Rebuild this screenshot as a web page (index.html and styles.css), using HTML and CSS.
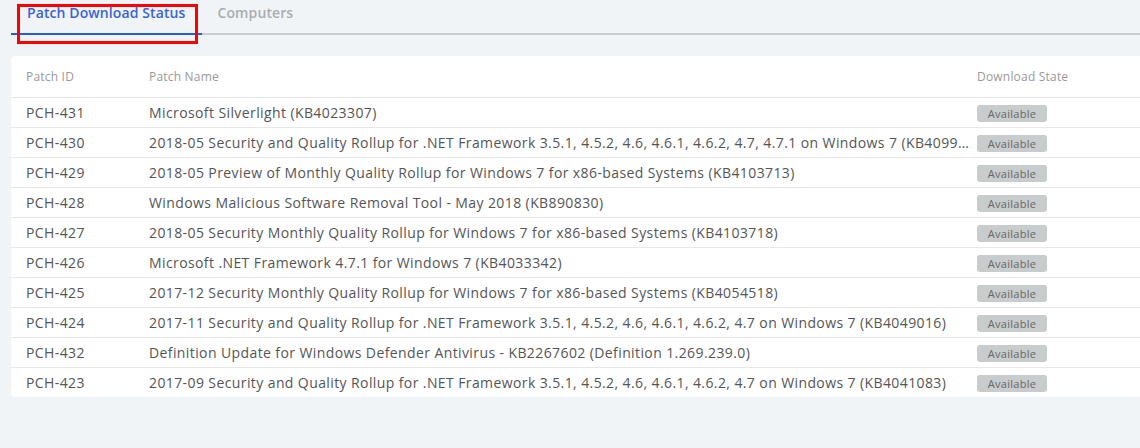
FILE: index.html
```html
<!DOCTYPE html>
<html lang="en">
<head>
    <meta charset="UTF-8">
    <title>Patch Download Status</title>
    <link rel="stylesheet" href="styles.css">
</head>
<body>
    <div class="tabs">
        <div class="tab tab-active">Patch Download Status<span class="highlight"></span></div>
        <div class="tab">Computers</div>
    </div>

    <div class="card">
        <table class="patches">
            <thead>
                <tr>
                    <th class="col-id">Patch ID</th>
                    <th class="col-name">Patch Name</th>
                    <th class="col-state">Download State</th>
                </tr>
            </thead>
            <tbody>
                <tr><td>PCH-431</td><td class="name">Microsoft Silverlight (KB4023307)</td><td class="state"><span class="badge">Available</span></td></tr>
                <tr><td>PCH-430</td><td class="name">2018-05 Security and Quality Rollup for .NET Framework 3.5.1, 4.5.2, 4.6, 4.6.1, 4.6.2, 4.7, 4.7.1 on Windows 7 (KB4099633)</td><td class="state"><span class="badge">Available</span></td></tr>
                <tr><td>PCH-429</td><td class="name">2018-05 Preview of Monthly Quality Rollup for Windows 7 for x86-based Systems (KB4103713)</td><td class="state"><span class="badge">Available</span></td></tr>
                <tr><td>PCH-428</td><td class="name">Windows Malicious Software Removal Tool - May 2018 (KB890830)</td><td class="state"><span class="badge">Available</span></td></tr>
                <tr><td>PCH-427</td><td class="name">2018-05 Security Monthly Quality Rollup for Windows 7 for x86-based Systems (KB4103718)</td><td class="state"><span class="badge">Available</span></td></tr>
                <tr><td>PCH-426</td><td class="name">Microsoft .NET Framework 4.7.1 for Windows 7 (KB4033342)</td><td class="state"><span class="badge">Available</span></td></tr>
                <tr><td>PCH-425</td><td class="name">2017-12 Security Monthly Quality Rollup for Windows 7 for x86-based Systems (KB4054518)</td><td class="state"><span class="badge">Available</span></td></tr>
                <tr><td>PCH-424</td><td class="name">2017-11 Security and Quality Rollup for .NET Framework 3.5.1, 4.5.2, 4.6, 4.6.1, 4.6.2, 4.7 on Windows 7 (KB4049016)</td><td class="state"><span class="badge">Available</span></td></tr>
                <tr><td>PCH-432</td><td class="name">Definition Update for Windows Defender Antivirus - KB2267602 (Definition 1.269.239.0)</td><td class="state"><span class="badge">Available</span></td></tr>
                <tr><td>PCH-423</td><td class="name">2017-09 Security and Quality Rollup for .NET Framework 3.5.1, 4.5.2, 4.6, 4.6.1, 4.6.2, 4.7 on Windows 7 (KB4041083)</td><td class="state"><span class="badge">Available</span></td></tr>
            </tbody>
        </table>
    </div>
</body>
</html>
```

FILE: styles.css
```css
body {
    margin: 0;
    background-color: #f0f4f7;
    font-family: "Open Sans", Lato, sans-serif;
    color: #555;
    overflow: hidden;
    width: 1140px;
}
.tabs {
    display: flex;
    margin-left: 11px;
    border-bottom: 2px solid #c8cccd;
    height: 35px;
    box-sizing: border-box;
}
.tab {
    position: relative;
    padding: 3px 16px 0 16px;
    font-size: 14px;
    font-weight: 600;
    letter-spacing: 0.1px;
    color: #a9adb0;
    line-height: 19px;
}
.tab-active {
    color: #3a64d4;
    border-bottom: 2px solid #2b5bd5;
    margin-bottom: -2px;
}
.highlight {
    position: absolute;
    left: 6px;
    top: 4px;
    width: 181px;
    height: 40px;
    box-sizing: border-box;
    border: 3px solid #ff0000;
}
.card {
    margin: 21px 0 0 11px;
    background-color: #fff;
    border-radius: 4px;
    width: 1140px;
}
.patches {
    width: 100%;
    border-collapse: collapse;
    table-layout: fixed;
}
.patches th {
    text-align: left;
    font-weight: normal;
    font-size: 12px;
    letter-spacing: 0.2px;
    color: #999;
    height: 41px;
    padding: 0 15px;
    border-bottom: 1px solid #e8e8e8;
}
.col-id {
    width: 93px;
}
.patches th.col-name {
    width: 826px;
    padding-right: 0;
}
.patches th.col-state,
.patches td.state {
    padding-left: 2px;
}
.patches td {
    height: 29px;
    padding: 0 15px;
    font-size: 14px;
    letter-spacing: 0.4px;
    border-bottom: 1px solid #e8e8e8;
    white-space: nowrap;
}
.patches tbody tr:last-child td {
    border-bottom: none;
}
.patches td.name {
    padding-right: 0;
    overflow: hidden;
    text-overflow: ellipsis;
}
.badge {
    display: inline-block;
    width: 70px;
    height: 17px;
    line-height: 17px;
    text-align: center;
    background-color: #c9cccc;
    color: #666;
    font-size: 11px;
    letter-spacing: 0.3px;
    border-radius: 3px;
}
```
